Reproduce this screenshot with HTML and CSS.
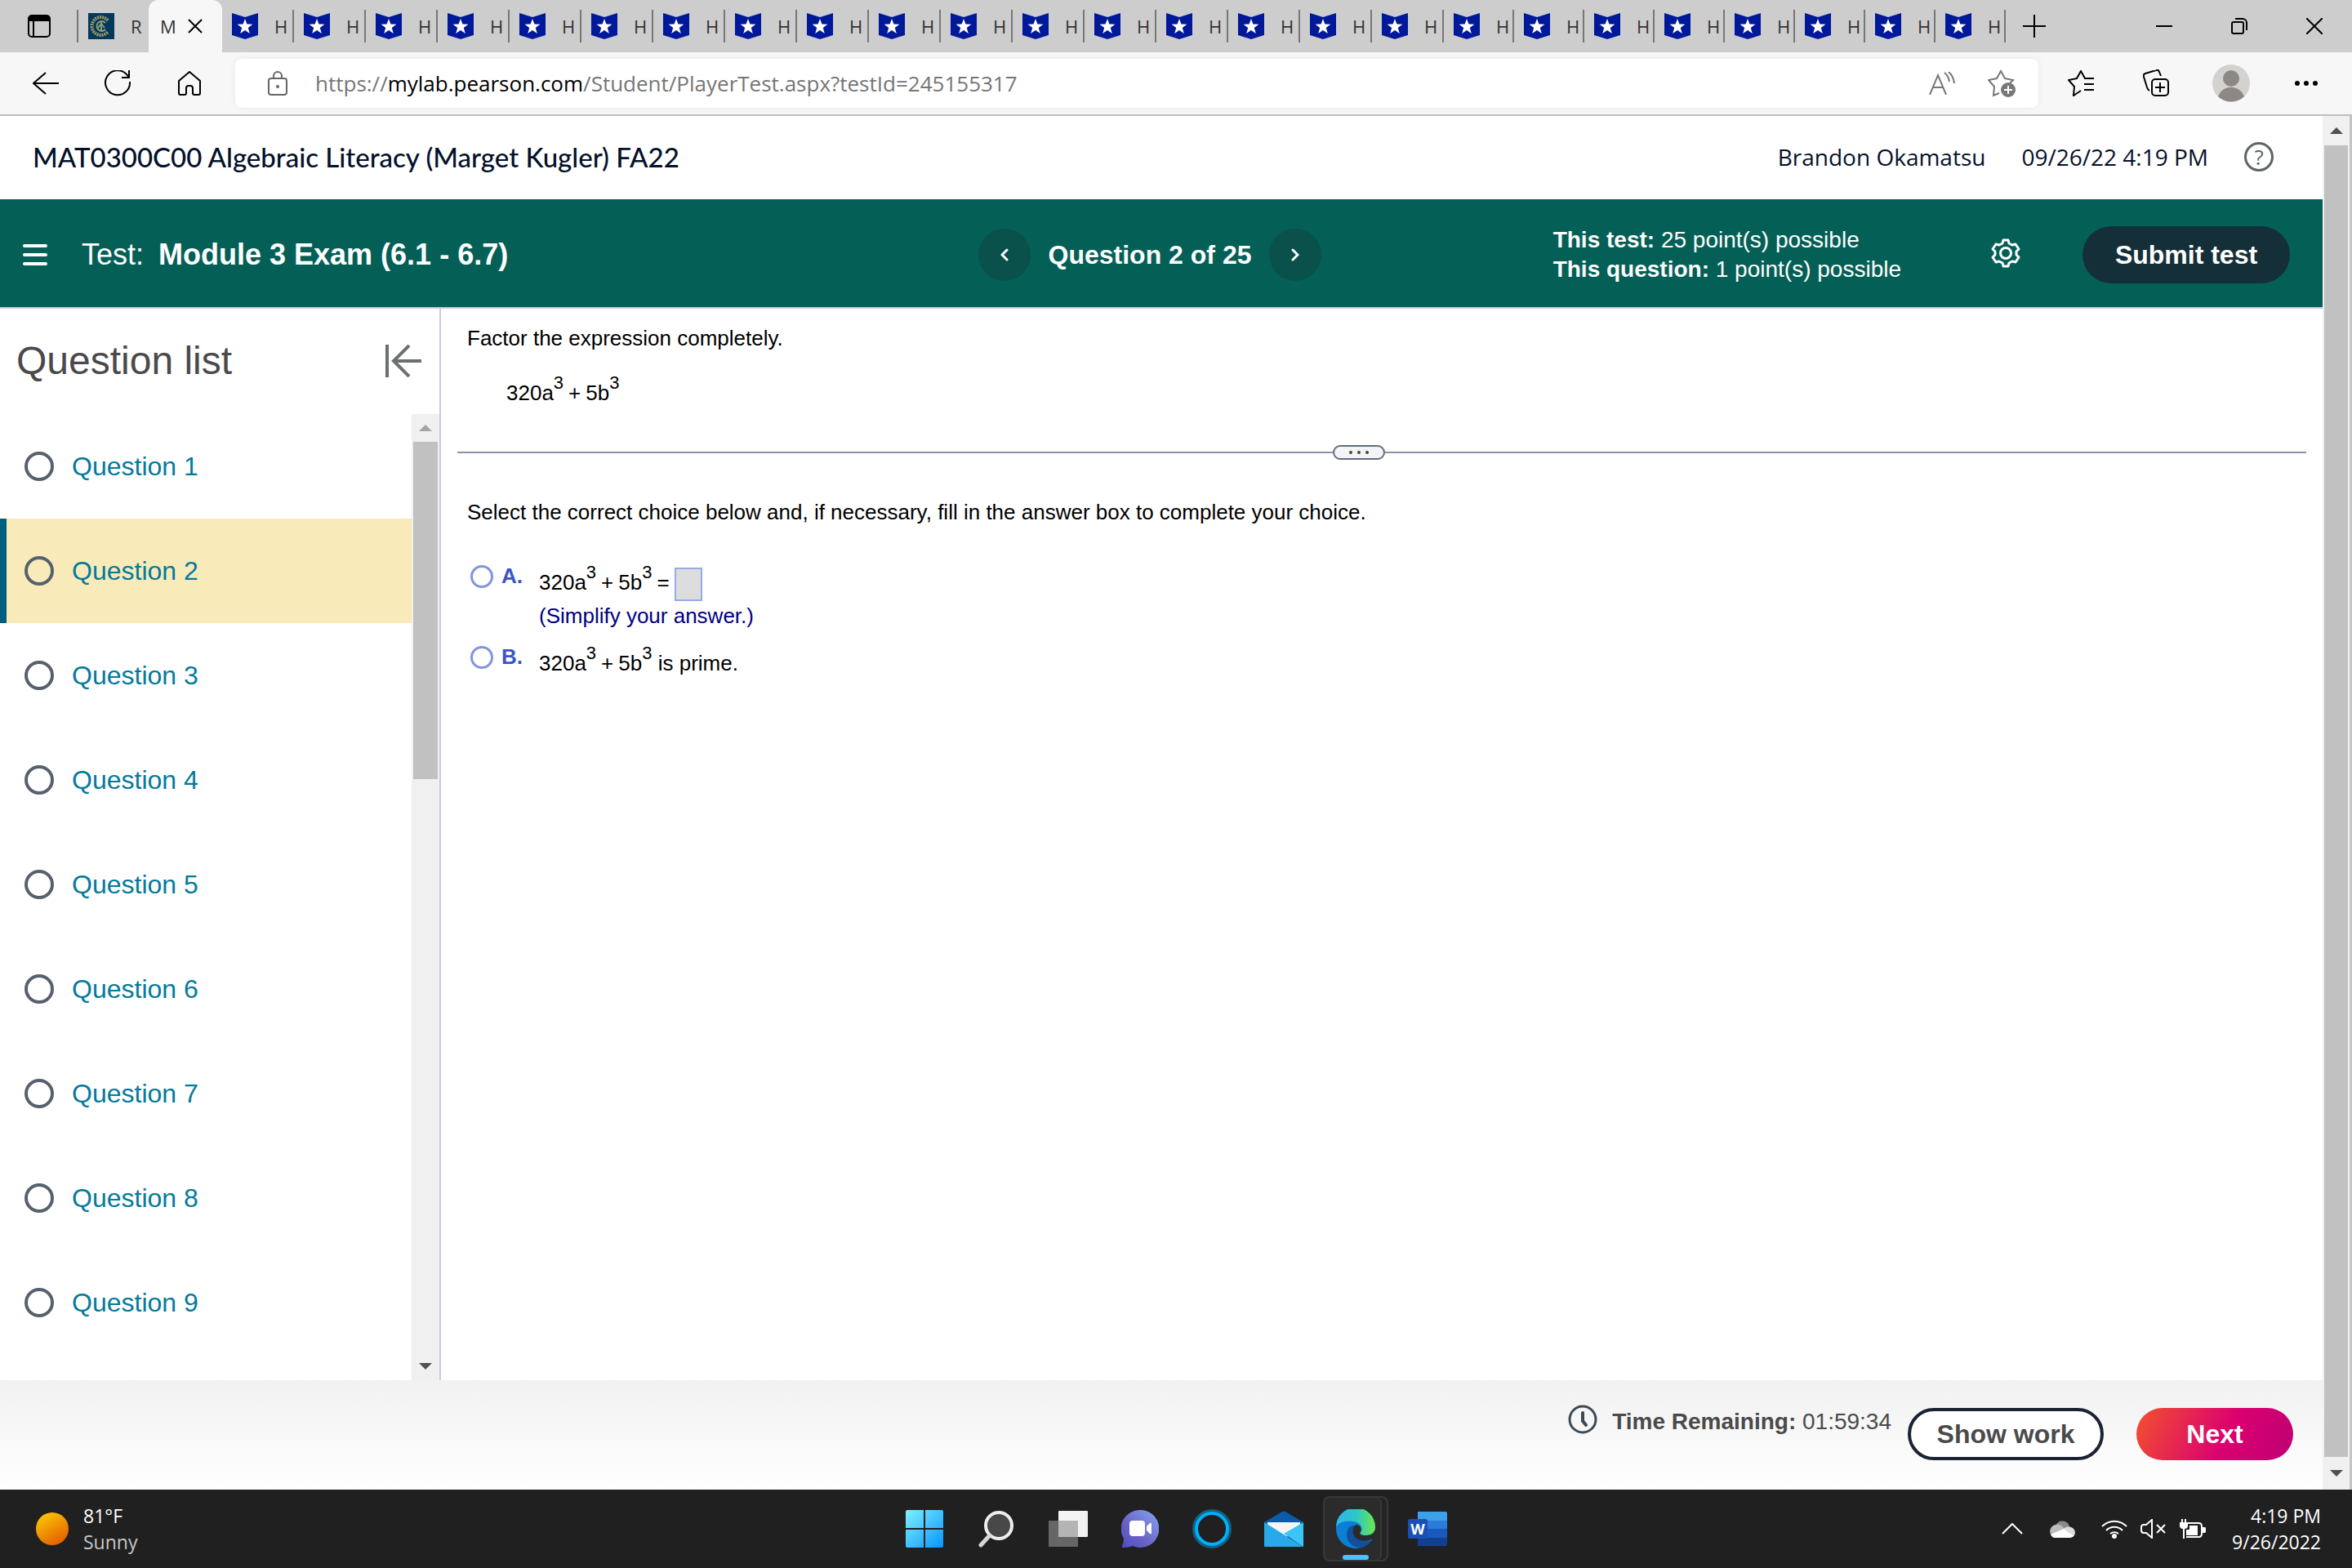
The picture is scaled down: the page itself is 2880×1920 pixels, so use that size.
FILE: index.html
```html
<!DOCTYPE html>
<html lang="en">
<head>
    <meta charset="UTF-8">
    <meta name="viewport" content="width=device-width, initial-scale=1.0">
    <title>Module 3 Exam (6.1 - 6.7)</title>
    <link rel="stylesheet" href="styles.css">
</head>
<body>
    <!-- Shared tab icon -->
    <svg class="defs" width="0" height="0">
        <symbol id="flag" viewBox="0 0 32 32">
            <path fill="#00189a" d="M0 0l16 5 16-5v27l-16 5-16-5z"/>
            <path fill="#fff" d="M16 7l2.400 6.600 7 .200-5.600 4.300 2 6.800-5.800-4-5.800 4 2-6.800-5.600-4.300 7-.200z"/>
        </symbol>
    </svg>

    <div class="tabs">
        <div class="tab tab-menu">
            <svg width="28" height="28" viewBox="0 0 28 28"><rect x="1" y="1" width="26" height="26" rx="4" fill="none" stroke="#000" stroke-width="2"/><path d="M1 8V5a4 4 0 0 1 4-4h18a4 4 0 0 1 4 4v3z"/><path d="M7 8v19" stroke="#000" stroke-width="2"/></svg>
        </div>
        <div class="tab tab-first">
            <svg width="32" height="32" viewBox="0 0 32 32"><path fill="#04395e" d="M0 0h32v32H0z"/><path d="M24 9a11 11 0 1 0 0 14" fill="none" stroke="#a39b5e" stroke-width="4" stroke-dasharray="2 1"/><path d="M21 12a6 6 0 1 0 0 8M16 10v12M12 18l4-5 4 5" fill="none" stroke="#8f9a78" stroke-width="2"/></svg>
            <span class="title">R</span>
        </div>
        <div class="tab-active">
            <span class="title">M</span>
            <svg width="18" height="18" viewBox="0 0 18 18"><path d="M1 1l16 16M17 1L1 17" stroke="#000" stroke-width="2"/></svg>
        </div>
        <div class="tab"><svg width="32" height="32"><use href="#flag"/></svg><span class="title">H</span></div>
        <div class="tab"><svg width="32" height="32"><use href="#flag"/></svg><span class="title">H</span></div>
        <div class="tab"><svg width="32" height="32"><use href="#flag"/></svg><span class="title">H</span></div>
        <div class="tab"><svg width="32" height="32"><use href="#flag"/></svg><span class="title">H</span></div>
        <div class="tab"><svg width="32" height="32"><use href="#flag"/></svg><span class="title">H</span></div>
        <div class="tab"><svg width="32" height="32"><use href="#flag"/></svg><span class="title">H</span></div>
        <div class="tab"><svg width="32" height="32"><use href="#flag"/></svg><span class="title">H</span></div>
        <div class="tab"><svg width="32" height="32"><use href="#flag"/></svg><span class="title">H</span></div>
        <div class="tab"><svg width="32" height="32"><use href="#flag"/></svg><span class="title">H</span></div>
        <div class="tab"><svg width="32" height="32"><use href="#flag"/></svg><span class="title">H</span></div>
        <div class="tab"><svg width="32" height="32"><use href="#flag"/></svg><span class="title">H</span></div>
        <div class="tab"><svg width="32" height="32"><use href="#flag"/></svg><span class="title">H</span></div>
        <div class="tab"><svg width="32" height="32"><use href="#flag"/></svg><span class="title">H</span></div>
        <div class="tab"><svg width="32" height="32"><use href="#flag"/></svg><span class="title">H</span></div>
        <div class="tab"><svg width="32" height="32"><use href="#flag"/></svg><span class="title">H</span></div>
        <div class="tab"><svg width="32" height="32"><use href="#flag"/></svg><span class="title">H</span></div>
        <div class="tab"><svg width="32" height="32"><use href="#flag"/></svg><span class="title">H</span></div>
        <div class="tab narrow"><svg width="32" height="32"><use href="#flag"/></svg><span class="title">H</span></div>
        <div class="tab narrow"><svg width="32" height="32"><use href="#flag"/></svg><span class="title">H</span></div>
        <div class="tab narrow"><svg width="32" height="32"><use href="#flag"/></svg><span class="title">H</span></div>
        <div class="tab narrow"><svg width="32" height="32"><use href="#flag"/></svg><span class="title">H</span></div>
        <div class="tab narrow"><svg width="32" height="32"><use href="#flag"/></svg><span class="title">H</span></div>
        <div class="tab narrow"><svg width="32" height="32"><use href="#flag"/></svg><span class="title">H</span></div>
        <div class="tab narrow"><svg width="32" height="32"><use href="#flag"/></svg><span class="title">H</span></div>
        <div class="tab narrow"><svg width="32" height="32"><use href="#flag"/></svg><span class="title">H</span></div>
        <button class="new-tab" aria-label="New tab"><svg width="28" height="28" viewBox="0 0 28 28"><path d="M14 0v28M0 14h28" stroke="#000" stroke-width="2"/></svg></button>
        <div class="window-buttons">
            <button aria-label="Minimize"><svg width="20" height="20" viewBox="0 0 20 20"><path d="M0 10h20" stroke="#000" stroke-width="2"/></svg></button>
            <button aria-label="Restore"><svg width="20" height="20" viewBox="0 0 20 20"><rect x="1" y="5" width="14" height="14" rx="2" fill="none" stroke="#000" stroke-width="2"/><path d="M5 1h9a5 5 0 0 1 5 5v9" fill="none" stroke="#000" stroke-width="2"/></svg></button>
            <button aria-label="Close"><svg width="20" height="20" viewBox="0 0 20 20"><path d="M0 0l20 20M20 0L0 20" stroke="#000" stroke-width="2"/></svg></button>
        </div>
    </div>

    <div class="toolbar">
        <button aria-label="Back"><svg width="32" height="28" viewBox="0 0 32 28"><path d="M32 14H1M16 1L1 14l15 13" fill="none" stroke="#000" stroke-width="2"/></svg></button>
        <button aria-label="Refresh"><svg width="32" height="32" viewBox="0 0 32 32"><path d="M31 14a15 15 0 1 1-4-9l3 4M30 0v9h-9" fill="none" stroke="#000" stroke-width="2"/></svg></button>
        <button aria-label="Home"><svg width="28" height="30" viewBox="0 0 28 30"><path d="M1 12L14 1l13 11v15a2 2 0 0 1-2 2h-5a2 2 0 0 1-2-2v-6a3 3 0 0 0-3-3h-2a3 3 0 0 0-3 3v6a2 2 0 0 1-2 2H3a2 2 0 0 1-2-2z" fill="none" stroke="#000" stroke-width="2"/></svg></button>
        <div class="address">
            <svg width="24" height="30" viewBox="0 0 24 30"><rect x="1" y="9" width="22" height="20" rx="3" fill="none" stroke="#666" stroke-width="2"/><path d="M7 9V6a5 5 0 0 1 10 0v3" fill="none" stroke="#666" stroke-width="2"/><circle cx="12" cy="19" r="2" fill="#666"/></svg>
            <span class="url">https://<b>mylab.pearson.com</b>/Student/PlayerTest.aspx?testId=245155317</span>
            <svg width="32" height="28" viewBox="0 0 32 28"><path d="M1 28L11 4l10 24M5 19h12M19 1q5 4 6 11M24 0q6 5 7 14" fill="none" stroke="#777" stroke-width="2"/></svg>
            <svg class="add-favorite" width="36" height="34" viewBox="0 0 36 34"><path d="M14 29l-7 3 1-11-7-8 10-2 5-9 5 9 10 2-4 4" fill="none" stroke="#777" stroke-width="2"/><circle cx="25" cy="25" r="9" fill="#777"/><path d="M25 20v10M20 25h10" stroke="#fff" stroke-width="2"/></svg>
        </div>
        <div class="toolbar-right">
            <button aria-label="Favorites"><svg width="32" height="32" viewBox="0 0 32 32"><path d="M16 25l-9 6 1-11-7-8 10-2 5-9 5 9h11M20 17h12M20 24h12" fill="none" stroke="#000" stroke-width="2"/></svg></button>
            <button aria-label="Collections"><svg width="32" height="34" viewBox="0 0 32 34"><rect x="11" y="12" width="20" height="20" rx="4" fill="none" stroke="#000" stroke-width="2"/><path d="M21 16v12M15 22h12M8 26q-2-1-3-4L1 9q-1-3 2-4l13-4q3-1 4 2l2 5" fill="none" stroke="#000" stroke-width="2"/></svg></button>
            <button aria-label="Profile"><svg width="46" height="46" viewBox="0 0 46 46"><circle cx="23" cy="23" r="23" fill="#d4d2cf"/><circle cx="23" cy="17" r="10" fill="#8c8886"/><path d="M7 39a17 17 0 0 1 32 0 23 23 0 0 1-32 0z" fill="#8c8886"/></svg></button>
            <button aria-label="More"><svg width="28" height="6" viewBox="0 0 28 6"><circle cx="3" cy="3" r="3"/><circle cx="14" cy="3" r="3"/><circle cx="25" cy="3" r="3"/></svg></button>
        </div>
    </div>

    <div class="page">
        <div class="content">
            <header class="course">
                <h1>MAT0300C00 Algebraic Literacy (Marget Kugler) FA22</h1>
                <span class="user">Brandon Okamatsu</span>
                <span class="date">09/26/22 4:19 PM</span>
                <a href="#" class="help" aria-label="Help">?</a>
            </header>

            <div class="test-bar">
                <div class="test-name">
                    <button class="menu" aria-label="Menu"><svg width="30" height="26" viewBox="0 0 30 26"><path d="M2 2h26M2 13h26M2 24h26" stroke="#fff" stroke-width="4" stroke-linecap="round"/></svg></button>
                    <span>Test:</span>
                    <strong>Module 3 Exam (6.1 - 6.7)</strong>
                </div>
                <div class="pager">
                    <button aria-label="Previous question"><svg width="10" height="16" viewBox="0 0 10 16"><path d="M8 2L2 8l6 6" fill="none" stroke="#fff" stroke-width="3" stroke-linecap="round"/></svg></button>
                    <strong>Question 2 of 25</strong>
                    <button aria-label="Next question"><svg width="10" height="16" viewBox="0 0 10 16"><path d="M2 2l6 6-6 6" fill="none" stroke="#fff" stroke-width="3" stroke-linecap="round"/></svg></button>
                </div>
                <div class="test-info">
                    <div class="points">
                        <div><b>This test:</b> 25 point(s) possible</div>
                        <div><b>This question:</b> 1 point(s) possible</div>
                    </div>
                    <button class="settings" aria-label="Settings"><svg width="36" height="36" viewBox="0 0 36 36"><path d="M15 2h6l1 4 4 2 4-1 4 6-3 3v4l3 3-4 6-4-1-4 2-1 4h-6l-1-4-4-2-4 1-4-6 3-3v-4l-3-3 4-6 4 1 4-2z" fill="none" stroke="#fff" stroke-width="3" stroke-linejoin="round"/><circle cx="18" cy="18" r="6.500" fill="none" stroke="#fff" stroke-width="3"/></svg></button>
                    <button class="submit">Submit test</button>
                </div>
            </div>

            <div class="body">
                <aside class="sidebar">
                    <div class="sidebar-head">
                        <h2>Question list</h2>
                        <button aria-label="Collapse list"><svg width="44" height="40" viewBox="0 0 44 40"><path d="M2 0v40M44 20H10M29 1L10 20l19 19" fill="none" stroke="#6a7070" stroke-width="4"/></svg></button>
                    </div>
                    <div class="list-wrap">
                        <ul class="questions">
                            <li><a href="#">Question 1</a></li>
                            <li class="current"><a href="#">Question 2</a></li>
                            <li><a href="#">Question 3</a></li>
                            <li><a href="#">Question 4</a></li>
                            <li><a href="#">Question 5</a></li>
                            <li><a href="#">Question 6</a></li>
                            <li><a href="#">Question 7</a></li>
                            <li><a href="#">Question 8</a></li>
                            <li><a href="#">Question 9</a></li>
                        </ul>
                        <div class="scrollbar list-scroll">
                            <span class="arrow up"></span>
                            <div class="track"><div class="thumb"></div></div>
                            <span class="arrow down"></span>
                        </div>
                    </div>
                </aside>

                <main>
                    <p>Factor the expression completely.</p>
                    <p class="expression">320a<sup>3</sup><span class="op">+</span>5b<sup>3</sup></p>
                    <div class="divider">
                        <button aria-label="Resize"><i></i><i></i><i></i></button>
                    </div>
                    <p>Select the correct choice below and, if necessary, fill in the answer box to complete your choice.</p>
                    <div class="choice">
                        <input type="radio" name="choice" id="choiceA">
                        <label for="choiceA">A.</label>
                        <div class="choice-text">
                            320a<sup>3</sup><span class="op">+</span>5b<sup>3</sup><span class="op">=</span><input type="text" class="answer" aria-label="Answer">
                            <div class="hint">(Simplify your answer.)</div>
                        </div>
                    </div>
                    <div class="choice">
                        <input type="radio" name="choice" id="choiceB">
                        <label for="choiceB">B.</label>
                        <div class="choice-text">320a<sup>3</sup><span class="op">+</span>5b<sup>3</sup> is prime.</div>
                    </div>
                </main>
            </div>

            <footer>
                <svg class="clock" width="36" height="36" viewBox="0 0 36 36"><circle cx="18" cy="18" r="16" fill="none" stroke="#3b4a58" stroke-width="3"/><path d="M18 10v10l4 5" fill="none" stroke="#3b4a58" stroke-width="4" stroke-linecap="round"/></svg>
                <div class="timer"><b>Time Remaining:</b> <span>01:59:34</span></div>
                <button class="show-work">Show work</button>
                <button class="next">Next</button>
            </footer>
        </div>
        <div class="scrollbar page-scroll">
            <span class="arrow up"></span>
            <div class="track"><div class="thumb"></div></div>
            <span class="arrow down"></span>
        </div>
    </div>

    <div class="taskbar">
        <div class="weather">
            <div class="sun"></div>
            <div>81°F<br><span>Sunny</span></div>
        </div>
        <div class="apps">
            <div class="app"><svg width="46" height="46" viewBox="0 0 46 46"><defs><linearGradient id="win" x1="0" y1="0" x2="46" y2="46" gradientUnits="userSpaceOnUse"><stop stop-color="#7df3ff"/><stop offset="1" stop-color="#0793ff"/></linearGradient></defs><path fill="url(#win)" d="M0 2a2 2 0 0 1 2-2h20v22H0zM24 0h20a2 2 0 0 1 2 2v20H24zM0 24h22v22H2a2 2 0 0 1-2-2zM24 24h22v20a2 2 0 0 1-2 2H24z"/></svg></div>
            <div class="app"><svg width="44" height="46" viewBox="0 0 44 46"><circle cx="25" cy="19" r="16" fill="#484848" stroke="#eceeef" stroke-width="4"/><path d="M13 32L3 43" stroke="#d5d8da" stroke-width="5" stroke-linecap="round"/></svg></div>
            <div class="app"><svg width="48" height="44" viewBox="0 0 48 44"><rect x="12" width="36" height="32" rx="1" fill="#f3f3f3"/><rect y="12" width="36" height="32" rx="1" fill="#666"/><path d="M12 12h24v20H12z" fill="#b4b4b4"/></svg></div>
            <div class="app"><svg width="46" height="46" viewBox="0 0 46 46"><defs><linearGradient id="chat" x1="0" y1="1" x2="1" y2="0"><stop stop-color="#4d4fc4"/><stop offset=".4" stop-color="#6b62c4"/><stop offset="1" stop-color="#85a8f5"/></linearGradient></defs><path fill="url(#chat)" d="M23 0a23 23 0 1 1-9 44q-5 2-12 2-2 0-1-2 2-4 2-9A23 23 0 0 1 23 0z"/><rect x="10" y="13" width="19" height="19" rx="4" fill="#fff"/><path d="M31 20l4-4q2-1 2 1v11q0 2-2 1l-4-4z" fill="#fff"/></svg></div>
            <div class="app"><svg width="48" height="48" viewBox="0 0 48 48"><circle cx="24" cy="24" r="22" fill="none" stroke="#136080" stroke-width="4"/><circle cx="24" cy="24" r="19" fill="none" stroke="#00b0fa" stroke-width="4"/></svg></div>
            <div class="app"><svg width="48" height="44" viewBox="0 0 48 44"><path fill="#0a5cab" d="M0 14L22 1q2-1 4 0l22 13v8H0z"/><path fill="#f5f5f5" d="M4 14h40v8L24 34 4 22z"/><path fill="#29a8ea" d="M0 14l48 30H1a1 1 0 0 1-1-1z"/><path fill="#3ac5f5" d="M48 14L24 28l24 16z"/></svg></div>
            <div class="app"><div class="app-open"><svg width="48" height="48" viewBox="0 0 48 48"><defs><linearGradient id="edgeTop"><stop stop-color="#32b4f0"/><stop offset=".5" stop-color="#2cc5c8"/><stop offset="1" stop-color="#6be84d"/></linearGradient></defs><circle cx="24" cy="24" r="24" fill="#0b7fd6"/><path fill="url(#edgeTop)" d="M0 22A24 24 0 0 1 48 22c0 7-5 10-11 10-6 0-9-1-7-4 4-6-1-12-9-13C11 13 3 16 0 22z"/><path fill="#114f9e" d="M14 26c-4 10 4 21 15 21 8-1 13-6 15-9-4 1-9 2-14 0-6-2-8-8-7-12 0-3 2-5 3-6-7-1-11 2-12 6z"/><path fill="#2b2b2b" d="M24 19c-5 5-5 14 3 18 6 3 12 2 16 0 2-1 3 0 1 3l4 3v-19c-1 5-5 8-11 8-6 0-9-1-7-4 2-4 0-9-6-9z"/></svg></div></div>
            <div class="app"><svg width="48" height="42" viewBox="0 0 48 42"><path fill="#3fa0ea" d="M12 0h34q2 0 2 2v9H12z"/><path fill="#2a7cd6" d="M12 11h36v10H12z"/><path fill="#1a5abf" d="M12 21h36v11H12z"/><path fill="#123f90" d="M12 32h36v8q0 2-2 2H12z"/><rect y="9" width="24" height="24" rx="2" fill="#1850b5"/><text x="12" y="28" text-anchor="middle" font-family="Open Sans, sans-serif" font-weight="bold" font-size="18" fill="#fff">W</text></svg></div>
        </div>
        <div class="tray">
            <svg width="26" height="14" viewBox="0 0 26 14"><path d="M1 13L13 1l12 12" fill="none" stroke="#fff" stroke-width="2"/></svg>
            <svg width="32" height="22" viewBox="0 0 32 22"><path fill="#8a8a8a" d="M8 7a9 9 0 0 1 17 1l-8 6z"/><path fill="#bdbdbd" d="M3 19A8 8 0 0 1 9 6q5-1 9 4l5 3z"/><path fill="#dedede" d="M18 11q4-4 9-2a7 7 0 0 1 4 10z"/><path fill="#fff" d="M2 18l16-7 13 8q-2 3-5 3H7q-3 0-5-4z"/></svg>
            <div class="status">
                <svg width="32" height="24" viewBox="0 0 32 24"><path d="M1 9a21 21 0 0 1 30 0M6 14a14 14 0 0 1 20 0M11 18a8 8 0 0 1 10 0" fill="none" stroke="#fff" stroke-width="2"/><circle cx="16" cy="21" r="3" fill="#fff"/></svg>
                <svg width="32" height="24" viewBox="0 0 32 24"><path d="M14 1v22l-7-6H4q-3 0-3-3v-4q0-3 3-3h3zM20 7l10 10M30 7L20 17" fill="none" stroke="#fff" stroke-width="2"/></svg>
                <svg width="32" height="24" viewBox="0 0 32 24"><path d="M10 5h13q4 0 4 4v9q0 4-4 4H8" fill="none" stroke="#fff" stroke-width="2"/><path d="M28 10h3q1 0 1 2v3q0 2-1 2h-3zM12 8h10v12H8v-7h4zM0 4h10v4q0 4-4 4v12H4V12q-4 0-4-4zM2 0h2v4H2zM6 0h2v4H6z" fill="#fff"/></svg>
            </div>
            <div class="time">4:19 PM<br>9/26/2022</div>
        </div>
    </div>
</body>
</html>
```
FILE: styles.css
```css
*,
*::before,
*::after {
    box-sizing: border-box;
}

body {
    margin: 0;
    min-height: 100vh;
    display: flex;
    flex-direction: column;
    font-family: "Liberation Sans", Arial, sans-serif;
    font-size: 26px;
    color: #000;
    background: #fff;
}

button {
    padding: 0;
    border: none;
    background: none;
    font-family: inherit;
    cursor: pointer;
}

svg {
    display: block;
    flex-shrink: 0;
}

.defs {
    position: absolute;
}

/* Browser tabs */
.tabs {
    display: flex;
    align-items: center;
    height: 64px;
    background: #cdcdcd;
    font-family: "Open Sans", sans-serif;
    font-size: 22px;
    color: #333;
}

.tab {
    flex: 0 0 88px;
    display: flex;
    align-items: center;
    gap: 20px;
    height: 40px;
    padding-left: 12px;
    border-right: 2px solid #777;
}

.tab.narrow {
    flex-basis: 86px;
}

.tab-menu {
    flex-basis: 96px;
    padding-left: 34px;
}

.tab-first {
    flex-basis: 86px;
    border-right: none;
}

.tab-active {
    flex: 0 0 90px;
    display: flex;
    align-items: center;
    justify-content: space-between;
    height: 64px;
    padding: 0 24px 0 14px;
    background: #f7f7f7;
    border-radius: 12px 12px 0 0;
}

.new-tab {
    width: 70px;
    display: flex;
    justify-content: center;
}

.window-buttons {
    display: flex;
    margin-left: auto;
}

.window-buttons button {
    width: 92px;
    display: flex;
    justify-content: center;
}

/* Address bar row */
.toolbar {
    display: flex;
    align-items: center;
    height: 78px;
    padding: 0 10px 0 12px;
    background: #f7f7f7;
    border-bottom: 2px solid #bdbdbd;
}

.toolbar button {
    width: 88px;
    display: flex;
    justify-content: center;
}

.address {
    flex: 1;
    display: flex;
    align-items: center;
    gap: 34px;
    height: 60px;
    margin: 0 6px 0 12px;
    padding: 0 26px 0 40px;
    background: #fff;
    border-radius: 8px;
    box-shadow: 0 0 8px rgba(0, 0, 0, 0.06);
}

.url {
    flex: 1;
    font-family: "Open Sans", sans-serif;
    font-size: 26px;
    color: #767676;
}

.url b {
    font-weight: normal;
    color: #000;
}

.add-favorite {
    margin-left: 6px;
}

.toolbar-right {
    display: flex;
    align-items: center;
}

.toolbar-right button {
    width: 92px;
}

/* Page */
.page {
    flex: 1;
    display: flex;
}

.content {
    flex: 1;
    display: flex;
    flex-direction: column;
}

.course {
    display: flex;
    align-items: center;
    height: 102px;
    padding: 0 60px 2px 40px;
    font-family: "Open Sans", sans-serif;
    font-size: 28px;
    color: #05112a;
}

.course h1 {
    flex: 1;
    margin: 0;
    font-family: Lato, sans-serif;
    font-size: 33px;
    font-weight: 500;
}

.date {
    margin: 0 44px;
}

.help {
    width: 36px;
    height: 36px;
    border: 3px solid #5d6464;
    border-radius: 50%;
    font-size: 26px;
    line-height: 30px;
    text-align: center;
    text-decoration: none;
    color: #5d6464;
}

.test-bar {
    display: grid;
    grid-template-columns: 1fr auto 1fr;
    align-items: center;
    height: 134px;
    padding: 4px 40px 0 28px;
    background: #046056;
    border-bottom: 2px solid #c8ccd8;
    color: #fff;
}

.test-name {
    display: flex;
    align-items: center;
    font-size: 36px;
}

.menu {
    margin-right: 42px;
}

.test-name strong {
    margin-left: 18px;
}

.pager {
    display: flex;
    align-items: center;
    gap: 22px;
    margin-right: 16px;
    font-size: 32px;
}

.pager button {
    display: flex;
    align-items: center;
    justify-content: center;
    width: 64px;
    height: 64px;
    border-radius: 50%;
    background: #0a504b;
}

.test-info {
    display: flex;
    align-items: center;
    justify-content: flex-end;
}

.points {
    font-size: 28px;
    line-height: 36px;
}

.settings {
    margin: 0 76px 4px 110px;
}

.submit {
    width: 254px;
    height: 70px;
    border-radius: 35px;
    background: #152f38;
    color: #fff;
    font-size: 32px;
    font-weight: bold;
}

.body {
    flex: 1;
    display: flex;
}

.sidebar {
    width: 540px;
    display: flex;
    flex-direction: column;
    border-right: 2px solid #c8cbdc;
}

.sidebar-head {
    display: flex;
    align-items: center;
    justify-content: space-between;
    height: 129px;
    padding: 0 22px 2px 20px;
}

.sidebar-head h2 {
    margin: 0;
    font-size: 48px;
    font-weight: normal;
    color: #4a4a4a;
}

.list-wrap {
    flex: 1;
    display: flex;
}

.questions {
    flex: 1;
    margin: 0;
    padding: 0;
    list-style: none;
}

.questions li {
    height: 128px;
    border-left: 8px solid transparent;
}

.questions .current {
    background: #f9ebb9;
    border-left-color: #005f7d;
}

.questions a {
    display: flex;
    align-items: center;
    gap: 22px;
    height: 100%;
    padding-left: 22px;
    font-size: 32px;
    color: #047a9c;
    text-decoration: none;
}

.questions a::before {
    content: "";
    width: 36px;
    height: 36px;
    border: 4px solid #56616d;
    border-radius: 50%;
}

/* Scrollbars */
.scrollbar {
    width: 34px;
    display: flex;
    flex-direction: column;
    background: #f0f0f0;
}

.track {
    flex: 1;
    padding: 0 2px;
}

.thumb {
    height: 100%;
    background: #c1c1c1;
}

.list-scroll .thumb {
    height: 37%;
}

.arrow {
    display: flex;
    align-items: center;
    justify-content: center;
    height: 34px;
}

.arrow::before {
    content: "";
    border: 8px solid transparent;
}

.arrow.up::before {
    border-top: none;
    border-bottom-color: #505050;
}

.arrow.down::before {
    border-bottom: none;
    border-top-color: #505050;
}

.list-scroll .arrow.up::before {
    border-bottom-color: #a3a3a3;
}

.page-scroll {
    width: 36px;
    border-right: 3px solid #c4c4c4;
}

.page-scroll .arrow {
    height: 36px;
}

.page-scroll .arrow.down {
    height: 40px;
}

/* Question */
main {
    flex: 1;
    padding: 18px 20px 0;
    line-height: 36px;
}

main p {
    margin: 0 12px;
}

main .expression {
    margin: 31px 60px 46px;
}

sup {
    font-size: 22px;
    line-height: 0;
    vertical-align: 14px;
}

.op {
    margin: 0 6px;
}

.divider {
    display: flex;
    align-items: center;
    margin-bottom: 46px;
}

.divider::before,
.divider::after {
    content: "";
    flex: 20;
    height: 2px;
    background: #8a94a6;
}

.divider::before {
    flex: 19;
}

.divider button {
    display: flex;
    align-items: center;
    justify-content: center;
    gap: 6px;
    width: 64px;
    height: 18px;
    border: 2px solid #5f6f80;
    border-radius: 9px;
    background: #f2f4f6;
}

.divider i {
    width: 4px;
    height: 4px;
    border-radius: 50%;
    background: #444;
}

.choice {
    display: flex;
    align-items: flex-start;
    margin: 14px 14px 0;
}

main p + .choice {
    margin-top: 42px;
}

.choice input[type="radio"] {
    appearance: none;
    width: 28px;
    height: 28px;
    margin: 5px 10px 0 2px;
    border: 3px solid #8195e0;
    border-radius: 50%;
}

.choice label {
    width: 46px;
    font-weight: bold;
    color: #3b55c8;
}

.choice-text {
    padding-top: 8px;
}

.answer {
    width: 34px;
    height: 41px;
    padding: 0;
    border: 2px solid #93aee6;
    background: #ddd;
    vertical-align: middle;
}

.hint {
    color: #000080;
}

footer {
    display: flex;
    align-items: center;
    justify-content: flex-end;
    height: 134px;
    padding: 0 36px 2px;
    background: linear-gradient(#f1f1f1, #fff);
    color: #4a4a4a;
}

.clock {
    margin: 0 18px 36px 0;
}

.timer {
    margin: 0 20px 30px 0;
    font-size: 28px;
}

footer button {
    height: 64px;
    border-radius: 32px;
    font-size: 32px;
    font-weight: bold;
}

.show-work {
    width: 240px;
    margin-right: 40px;
    border: 4px solid #1a2331;
    background: #fff;
    color: #4a4a4a;
}

.next {
    width: 192px;
    background: linear-gradient(115deg, #f2512d, #db0070 58%, #bd0073);
    color: #fff;
}

/* Taskbar */
.taskbar {
    display: grid;
    grid-template-columns: 1fr auto 1fr;
    align-items: center;
    height: 96px;
    padding: 0 38px;
    background: #202020;
    color: #fff;
    font-family: "Open Sans", sans-serif;
    font-size: 23px;
    line-height: 32px;
}

.weather {
    display: flex;
    align-items: center;
    gap: 18px;
    padding-left: 6px;
}

.weather span {
    color: #c8c8c8;
}

.sun {
    width: 40px;
    height: 40px;
    border-radius: 50%;
    background: linear-gradient(150deg, #ffd400, #ee9000 50%, #e05000);
}

.apps {
    display: flex;
}

.app {
    width: 88px;
    display: flex;
    align-items: center;
    justify-content: center;
}

.app-open {
    position: relative;
    display: flex;
    align-items: center;
    justify-content: center;
    width: 80px;
    height: 80px;
    border: 2px solid #383838;
    border-radius: 8px;
    background: #2b2b2b;
    box-shadow: inset -6px 0 #242424, inset -8px 0 #383838;
}

.app-open::after {
    content: "";
    position: absolute;
    bottom: 0;
    left: 22px;
    width: 32px;
    height: 6px;
    border-radius: 3px;
    background: #4cc2ff;
}

.tray {
    display: flex;
    align-items: center;
    justify-content: flex-end;
    gap: 32px;
}

.status {
    display: flex;
    gap: 16px;
}

.time {
    text-align: right;
}
```
